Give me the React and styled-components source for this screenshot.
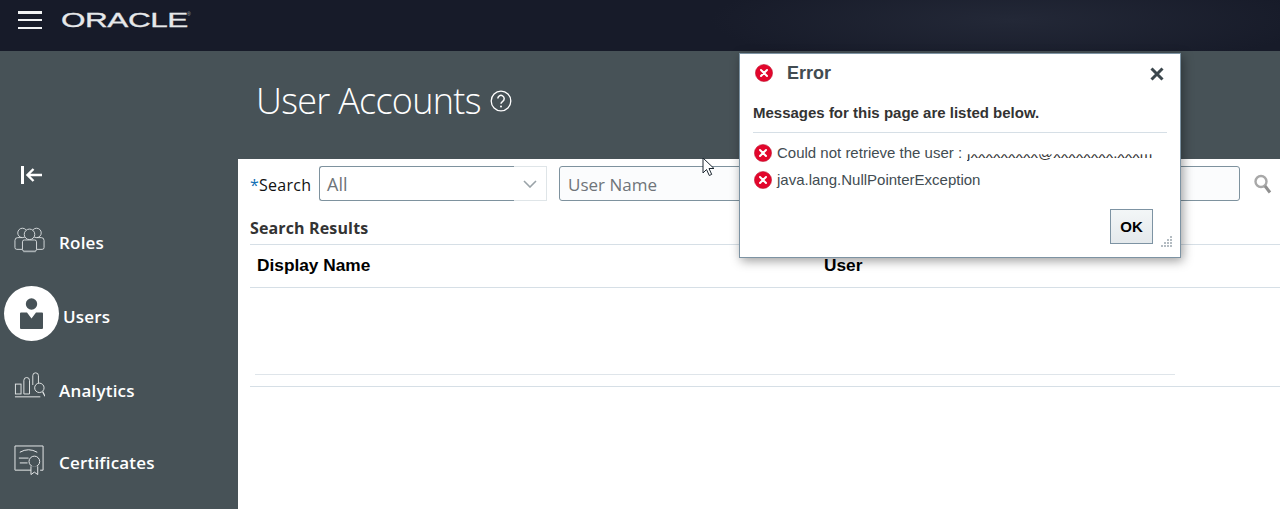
import React from "react";
import styled, { createGlobalStyle } from "styled-components";

const GlobalStyle = createGlobalStyle`
  html, body {
    margin: 0;
    padding: 0;
    height: 100%;
    background: #fff;
    overflow: hidden;
  }
  #root {
    height: 100%;
  }
`;

const Page = styled.div`
  position: relative;
  width: 1280px;
  height: 509px;
  overflow: hidden;
  display: flex;
  flex-direction: column;
  font-family: "Open Sans", "Liberation Sans", sans-serif;
`;

const TopBar = styled.header`
  height: 51px;
  flex: none;
  display: flex;
  align-items: flex-start;
  padding: 11px 0 0 18px;
  box-sizing: border-box;
  gap: 19px;
  background: radial-gradient(ellipse 300px 50px at 1010px 20px, #232837 0%, #171b29 100%);
`;

const Burger = styled.div`
  width: 24px;
  height: 18px;
  display: flex;
  flex-direction: column;
  justify-content: space-between;
  & > span {
    display: block;
    height: 2.5px;
    background: #f2f3f4;
  }
`;

const LogoWrap = styled.div`
  height: 17px;
  display: flex;
  align-items: center;
  color: #e6e8ea;
  position: relative;
  width: 130px;
`;

const LogoText = styled.span`
  font-family: "Liberation Sans", sans-serif;
  font-size: 21px;
  font-weight: 400;
  line-height: 17px;
  display: inline-block;
  transform: scaleX(1.5);
  transform-origin: left center;
  letter-spacing: -0.3px;
  -webkit-text-stroke: 0.3px #e6e8ea;
`;

const LogoMark = styled.span`
  position: absolute;
  left: 126px;
  top: 1px;
  font-family: "Liberation Sans", sans-serif;
  font-size: 5px;
  line-height: 5px;
  color: #aab0b6;
`;

const Body = styled.div`
  flex: 1;
  display: flex;
  min-height: 0;
`;

const Sidebar = styled.nav`
  width: 238px;
  flex: none;
  background: #475257;
  padding-top: 107px;
  box-sizing: border-box;
  display: flex;
  flex-direction: column;
`;

const Collapse = styled.div`
  height: 34px;
  padding-left: 21px;
  display: flex;
  align-items: center;
  margin-bottom: 13px;
`;

const NavItem = styled.div`
  height: ${(p) => p.$h}px;
  display: flex;
  align-items: center;
  padding-left: ${(p) => (p.$active ? 4 : 14)}px;
  gap: ${(p) => (p.$active ? 4 : 14)}px;
  color: #fff;
  font-size: 17px;
  font-weight: 600;
  letter-spacing: 0.2px;
`;

const IconSlot = styled.span`
  width: 31px;
  display: flex;
  flex: none;
  margin-top: ${(p) => p.$up || 0}px;
`;

const ActiveCircle = styled.span`
  width: 55px;
  height: 55px;
  border-radius: 50%;
  background: #fff;
  flex: none;
  display: flex;
  align-items: center;
  justify-content: center;
  margin-top: -5px;
`;

const Content = styled.main`
  flex: 1;
  display: flex;
  flex-direction: column;
  min-width: 0;
`;

const TitleBand = styled.div`
  height: 108px;
  flex: none;
  background: #475257;
  display: flex;
  align-items: flex-start;
  gap: 9px;
  padding: 26px 0 0 18px;
  box-sizing: border-box;
`;

const Title = styled.h1`
  margin: 0;
  font-size: 36px;
  line-height: 48px;
  font-weight: 300;
  color: #fff;
  letter-spacing: -0.72px;
`;

const HelpIcon = styled.svg`
  width: 22px;
  height: 22px;
  margin-top: 13px;
`;

const Panel = styled.div`
  flex: 1;
  background: #fff;
  padding: 7px 0 0 12px;
  display: flex;
  flex-direction: column;
`;

const SearchRow = styled.div`
  height: 35px;
  display: flex;
  align-items: center;
`;

const SearchLabel = styled.label`
  width: 69px;
  flex: none;
  padding-top: 2px;
  font-size: 16px;
  font-weight: 500;
  color: #111;
  letter-spacing: 0.25px;
  & > b {
    color: #0f6fb5;
    font-weight: 400;
  }
`;

const SelectBox = styled.div`
  width: 228px;
  height: 35px;
  box-sizing: border-box;
  display: flex;
  flex: none;
  margin-right: 12px;
`;

const SelectValue = styled.div`
  width: 195px;
  box-sizing: border-box;
  border: 1px solid #7e929e;
  border-right: 0;
  border-radius: 3px 0 0 3px;
  padding-left: 7px;
  font-size: 18px;
  line-height: 35px;
  color: #6f7479;
`;

const SelectArrow = styled.div`
  flex: 1;
  border: 1px solid #dfe5e8;
  border-left: 0;
  display: flex;
  align-items: center;
  justify-content: center;
`;

const TextInput = styled.div`
  width: 681px;
  height: 35px;
  flex: none;
  box-sizing: border-box;
  border: 1px solid #7e929e;
  border-radius: 3px;
  background: #fbfcfd;
  padding-left: 8px;
  font-size: 17px;
  line-height: 35px;
  color: #6f7479;
`;

const SearchButton = styled.span`
  margin-left: 14px;
  display: flex;
`;

const ResultsHeading = styled.h2`
  margin: 0;
  height: 44px;
  box-sizing: border-box;
  padding-top: 16px;
  font-size: 16px;
  line-height: 22px;
  font-weight: 700;
  color: #333;
  border-bottom: 1px solid #d6dfe6;
  letter-spacing: 0.14px;
`;

const TableHead = styled.div`
  height: 43px;
  box-sizing: border-box;
  padding: 0 0 2px 7px;
  border-bottom: 1px solid #d6dfe6;
  display: grid;
  grid-template-columns: 567px 1fr;
  align-items: center;
  font-family: "Liberation Sans", Arial, sans-serif;
  font-size: 17.3px;
  font-weight: 700;
  color: #000;
`;

const EmptyRows = styled.div`
  height: 86px;
  margin-left: 5px;
  width: 920px;
  border-bottom: 1px solid #dfe5ea;
`;

const TableFoot = styled.div`
  height: 11px;
  border-bottom: 1px solid #d6dfe6;
`;

const Dialog = styled.div`
  position: absolute;
  left: 739px;
  top: 53px;
  width: 442px;
  height: 205px;
  box-sizing: border-box;
  background: #fff;
  border: 1px solid #7d93a3;
  box-shadow: 2px 3px 10px rgba(0, 0, 0, 0.38);
  padding: 0 13px;
  display: flex;
  flex-direction: column;
  font-family: "Liberation Sans", Arial, sans-serif;
`;

const DialogHeader = styled.div`
  height: 38px;
  display: flex;
  align-items: center;
  padding-left: 2px;
  gap: 14px;
`;

const DialogTitle = styled.div`
  flex: 1;
  font-size: 18px;
  font-weight: 700;
  color: #424c52;
  line-height: 38px;
`;

const CloseIcon = styled.svg`
  width: 14px;
  height: 14px;
  margin-right: 3px;
  margin-top: 1px;
`;

const Intro = styled.div`
  height: 41px;
  box-sizing: border-box;
  padding-top: 12px;
  font-size: 15px;
  line-height: 18px;
  font-weight: 700;
  color: #333;
  border-bottom: 1px solid #d6dfe6;
`;

const MessageList = styled.div`
  padding-top: 6px;
  display: flex;
  flex-direction: column;
`;

const Message = styled.div`
  height: 27px;
  display: flex;
  align-items: center;
  gap: 5px;
  font-size: 15px;
  color: #424c52;
  padding-left: 1px;
`;

const RedactedText = styled.span`
  font-size: 15px;
  color: #333;
  clip-path: inset(60% 0 0 0);
`;

const DialogFooter = styled.div`
  display: flex;
  justify-content: flex-end;
  padding: 16px 14px 0 0;
`;

const OkButton = styled.button`
  width: 43px;
  height: 35px;
  box-sizing: border-box;
  border: 1px solid #7d93a3;
  border-radius: 0;
  background: linear-gradient(#f3f6f7, #e4e9ec);
  font-family: "Liberation Sans", Arial, sans-serif;
  font-size: 15px;
  font-weight: 700;
  color: #000;
  padding: 0;
`;

const Grip = styled.svg`
  position: absolute;
  right: 7px;
  bottom: 9px;
  width: 12px;
  height: 12px;
`;

const Cursor = styled.svg`
  position: absolute;
  left: 702px;
  top: 157px;
  width: 14px;
  height: 20px;
`;

const ErrorIcon = ({ size = 18 }) => (
  <svg width={size} height={size} viewBox="0 0 18 18" style={{ flex: "none" }}>
    <circle cx="9" cy="9" r="8.6" fill="#e2062c" />
    <circle cx="9" cy="9" r="8.6" fill="none" stroke="#b9142f" strokeWidth="0.5" />
    <path d="M6 6l6 6M12 6l-6 6" stroke="#fff" strokeWidth="2" strokeLinecap="round" />
  </svg>
);

const RolesIcon = () => (
  <svg width="33" height="27" viewBox="0 0 33 27" fill="none" stroke="#d9dddf" strokeWidth="1">
    <circle cx="9" cy="6.5" r="5" />
    <circle cx="24" cy="6.5" r="5" />
    <path d="M9 11.5H4a3 3 0 0 0-3 3V22a2 2 0 0 0 2 2h6" />
    <path d="M24 11.5h5a3 3 0 0 1 3 3V22a2 2 0 0 1-2 2h-6" />
    <circle cx="16.5" cy="8" r="5.6" fill="#475257" />
    <path d="M9 16a2 2 0 0 1 2-2h11a2 2 0 0 1 2 2v8a2 2 0 0 1-2 2H11a2 2 0 0 1-2-2z" fill="#475257" />
    <path d="M10 26.300h13" stroke="#a9b0b3" strokeWidth="1.500" />
  </svg>
);

const UsersIcon = () => (
  <svg width="23" height="31" viewBox="0 0 23 31" fill="#475257">
    <circle cx="11.5" cy="6" r="5.7" />
    <path d="M1 14.5h6l4.5 6 4.5-6h6a1 1 0 0 1 1 1V30a1 1 0 0 1-1 1H1a1 1 0 0 1-1-1V15.500a1 1 0 0 1 1-1z" />
  </svg>
);

const AnalyticsIcon = () => (
  <svg width="33" height="27" viewBox="0 0 33 27" fill="none" stroke="#e4e7e8" strokeWidth="1">
    <rect x="1.5" y="12" width="6" height="10.500" />
    <path d="M10.500 22.500V8a3 3 0 0 1 6 0v14.500z" />
    <path d="M20 13V3a3 3 0 0 1 6 0v8" />
    <circle cx="27" cy="16" r="5" fill="#475257" />
    <path d="M30.500 20l2.500 5" strokeWidth="1.300" />
    <path d="M1 25.500h27" stroke="#b5babc" strokeWidth="1.500" />
  </svg>
);

const CertificatesIcon = () => (
  <svg width="32" height="31" viewBox="0 0 32 31" fill="none" stroke="#e8eaeb" strokeWidth="1">
    <path d="M1 25.500V0.500h29v25H27" />
    <path d="M1 25.500h23" stroke="#b5babc" strokeWidth="1.500" />
    <path d="M6 7a18 18 0 0 1 18 0" />
    <path d="M5 13h10M6 18h8" />
    <circle cx="21" cy="16.500" r="5.500" fill="#475257" />
    <path d="M17.500 21.500v8.500l3.500-2.500 3.500 2.500v-8.500" fill="#475257" />
  </svg>
);

export default function App() {
  return (
    <>
      <GlobalStyle />
      <Page>
        <TopBar>
          <Burger>
            <span />
            <span />
            <span />
          </Burger>
          <LogoWrap>
            <LogoText>ORACLE</LogoText>
            <LogoMark>®</LogoMark>
          </LogoWrap>
        </TopBar>
        <Body>
          <Sidebar>
            <Collapse>
              <svg width="21" height="18" viewBox="0 0 21 18" fill="none" stroke="#fff">
                <path d="M1.500 0v18" strokeWidth="3" />
                <path d="M21 9H7M12.500 3l-6 6 6 6" strokeWidth="2.400" />
              </svg>
            </Collapse>
            <NavItem $h={74}>
              <IconSlot $up={-6}>
                <RolesIcon />
              </IconSlot>
              Roles
            </NavItem>
            <NavItem $h={74} $active>
              <ActiveCircle>
                <UsersIcon />
              </ActiveCircle>
              Users
            </NavItem>
            <NavItem $h={74}>
              <IconSlot $up={-9}>
                <AnalyticsIcon />
              </IconSlot>
              Analytics
            </NavItem>
            <NavItem $h={71}>
              <IconSlot $up={-5}>
                <CertificatesIcon />
              </IconSlot>
              Certificates
            </NavItem>
          </Sidebar>
          <Content>
            <TitleBand>
              <Title>User Accounts</Title>
              <HelpIcon viewBox="0 0 22 22" fill="none" stroke="#fff">
                <circle cx="11" cy="11" r="9.800" strokeWidth="1.300" />
                <path d="M7.800 8.600a3.200 3.200 0 1 1 4.900 2.700c-1.100.7-1.700 1.300-1.700 2.500" strokeWidth="1.500" />
                <circle cx="11" cy="16.500" r="1" fill="#fff" stroke="none" />
              </HelpIcon>
            </TitleBand>
            <Panel>
              <SearchRow>
                <SearchLabel>
                  <b>*</b>Search
                </SearchLabel>
                <SelectBox>
                  <SelectValue>All</SelectValue>
                  <SelectArrow>
                    <svg width="14" height="8" viewBox="0 0 14 8" fill="none" stroke="#9aa3a8" strokeWidth="1.600">
                      <path d="M1 1l6 6 6-6" />
                    </svg>
                  </SelectArrow>
                </SelectBox>
                <TextInput>User Name</TextInput>
                <SearchButton>
                  <svg width="18" height="20" viewBox="0 0 18 20" fill="none">
                    <circle cx="7" cy="7.500" r="5.500" stroke="#a8a8a8" strokeWidth="2.400" />
                    <path d="M11 12l5 6.500" stroke="#8f8f8f" strokeWidth="3" />
                  </svg>
                </SearchButton>
              </SearchRow>
              <ResultsHeading>Search Results</ResultsHeading>
              <TableHead>
                <span>Display Name</span>
                <span>User</span>
              </TableHead>
              <EmptyRows />
              <TableFoot />
            </Panel>
          </Content>
        </Body>
        <Cursor viewBox="0 0 14 20">
          <path d="M1 1v15l3.500-3.500 2.800 6 2.400-1.100-2.700-5.900H12z" fill="#fff" stroke="#1c2730" strokeWidth="1" />
        </Cursor>
        <Dialog>
          <DialogHeader>
            <ErrorIcon />
            <DialogTitle>Error</DialogTitle>
            <CloseIcon viewBox="0 0 14 14" stroke="#3c474d" strokeWidth="3">
              <path d="M1.500 1.500l11 11M12.500 1.500l-11 11" />
            </CloseIcon>
          </DialogHeader>
          <Intro>Messages for this page are listed below.</Intro>
          <MessageList>
            <Message>
              <ErrorIcon />
              <span>Could not retrieve the user :</span>
              <RedactedText>jxxxxxxxxx@xxxxxxxx.xxxm</RedactedText>
            </Message>
            <Message>
              <ErrorIcon />
              <span>java.lang.NullPointerException</span>
            </Message>
          </MessageList>
          <DialogFooter>
            <OkButton>OK</OkButton>
          </DialogFooter>
          <Grip viewBox="0 0 12 12" fill="#b4bcc2">
            <rect x="9" y="0" width="2" height="2" />
            <rect x="6" y="3" width="2" height="2" />
            <rect x="9" y="3" width="2" height="2" />
            <rect x="3" y="6" width="2" height="2" />
            <rect x="6" y="6" width="2" height="2" />
            <rect x="9" y="6" width="2" height="2" />
            <rect x="0" y="9" width="2" height="2" />
            <rect x="3" y="9" width="2" height="2" />
            <rect x="6" y="9" width="2" height="2" />
            <rect x="9" y="9" width="2" height="2" />
          </Grip>
        </Dialog>
      </Page>
    </>
  );
}
